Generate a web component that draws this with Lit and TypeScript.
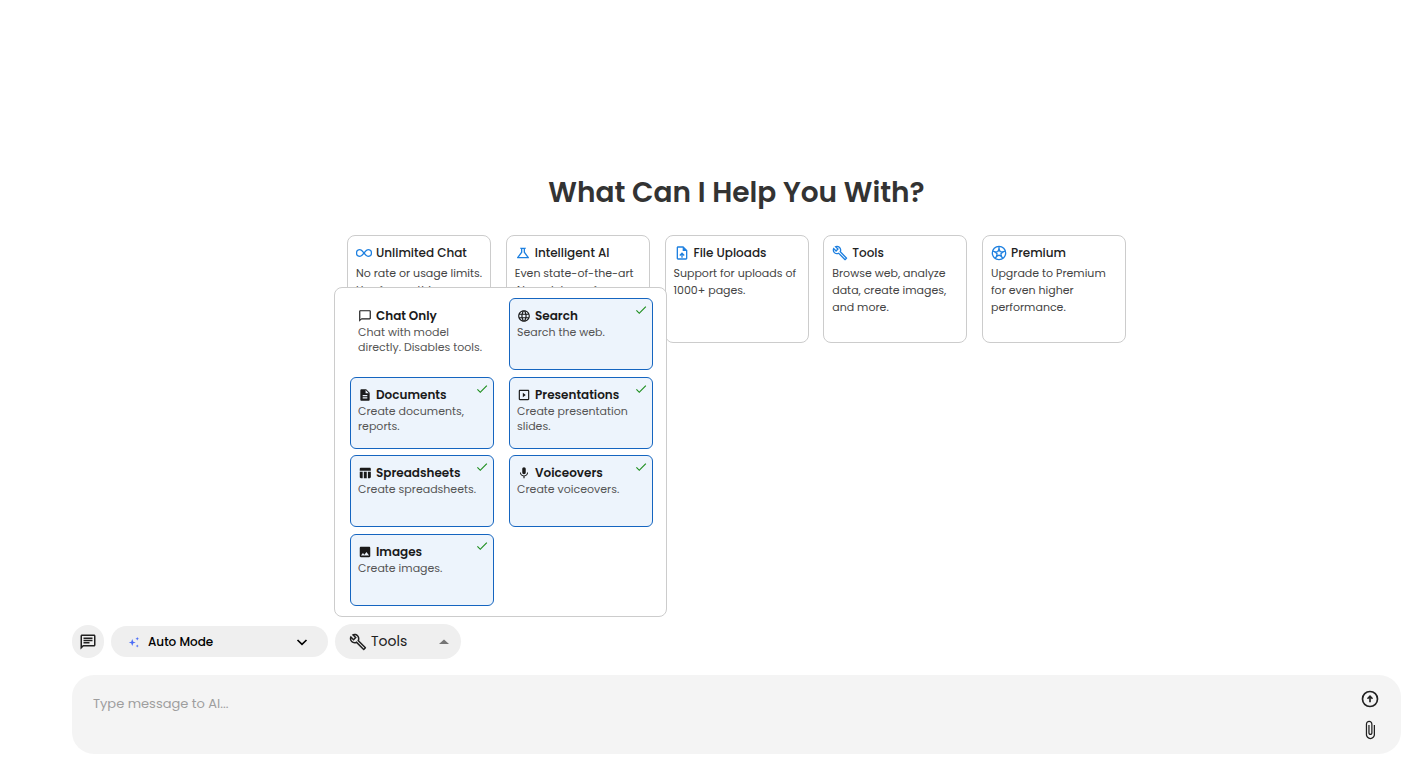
import { LitElement, html, css, svg } from "lit";
import { customElement, property, state } from "lit/decorators.js";
import { classMap } from "lit/directives/class-map.js";

const ICONS: Record<string, unknown> = {
  infinity: svg`<path d="M12 12C9.9 9.2 8.4 6.900 5.900 6.900a5.100 5.100 0 0 0 0 10.200C8.400 17.100 9.900 14.800 12 12s3.600-5.100 6.100-5.100a5.100 5.100 0 0 1 0 10.200C15.600 17.100 14.100 14.800 12 12Z" fill="none" stroke="currentColor" stroke-width="2"/>`,
  flask: svg`<path d="M13 11.33 18 18H6l5-6.67V6h2m2.96-2H8.04c-.42 0-.65.48-.39.81L9 6.5v4.17L3.2 18.4c-.49.66-.02 1.6.8 1.6h16c.82 0 1.29-.94.8-1.6L15 10.67V6.5l1.35-1.69c.26-.33.03-.81-.39-.81"/>`,
  upload: svg`<path d="M14 2H6c-1.1 0-1.99.9-1.99 2L4 20c0 1.1.89 2 1.99 2H18c1.1 0 2-.9 2-2V8l-6-6zm4 18H6V4h7v5h5v11zM8 15.01l1.41 1.41L11 14.84V19h2v-4.16l1.59 1.59L16 15.01 12.01 11z"/>`,
  wrench: svg`<path d="M22.61 18.99l-9.08-9.08c.93-2.34.45-5.1-1.44-7C9.79.61 6.21.4 3.66 2.26L7.5 6.11 6.08 7.52 2.25 3.69C.39 6.23.6 9.82 2.9 12.11c1.86 1.86 4.57 2.35 6.89 1.48l9.11 9.11c.39.39 1.02.39 1.41 0l2.3-2.3c.4-.38.4-1.01 0-1.41zm-3 1.6l-9.46-9.46c-.61.45-1.29.72-2 .82-1.36.2-2.79-.21-3.83-1.25C3.37 9.76 2.93 8.5 3 7.26l3.09 3.09 4.24-4.24-3.09-3.09c1.24-.07 2.49.37 3.44 1.31 1.08 1.08 1.49 2.57 1.24 3.96-.12.71-.42 1.37-.88 1.96l9.45 9.45-.88.89z"/>`,
  star: svg`<g fill="none" stroke="currentColor" stroke-width="2" stroke-linejoin="round"><circle cx="12" cy="12" r="10"/><path d="m12 6.2 1.8 3.7 4 .5-2.9 2.8.7 4L12 15.3l-3.6 1.9.7-4-2.9-2.8 4-.5z"/><path d="M12 2v4.2M21.5 9l-3.7 1.4M17.9 20.1l-2.3-2.9M6.1 20.1l2.3-2.9M2.5 9l3.7 1.4"/></g>`,
  bubble: svg`<path d="M20 2H4c-1.1 0-2 .9-2 2v18l4-4h14c1.1 0 2-.9 2-2V4c0-1.1-.9-2-2-2zm0 14H6l-2 2V4h16v12z"/>`,
  chat: svg`<path d="M4 4h16v12H5.17L4 17.17V4m0-2c-1.1 0-1.99.9-1.99 2L2 22l4-4h14c1.1 0 2-.9 2-2V4c0-1.1-.9-2-2-2H4zm2 10h8v2H6v-2zm0-3h12v2H6V9zm0-3h12v2H6V6z"/>`,
  globe: svg`<path d="M11.99 2C6.47 2 2 6.48 2 12s4.47 10 9.99 10C17.52 22 22 17.52 22 12S17.52 2 11.99 2zm6.93 6h-2.95c-.32-1.25-.78-2.45-1.38-3.56 1.84.63 3.37 1.91 4.33 3.56zM12 4.04c.83 1.2 1.48 2.53 1.91 3.96h-3.82c.43-1.43 1.08-2.76 1.91-3.96zM4.26 14C4.1 13.36 4 12.69 4 12s.1-1.36.26-2h3.38c-.08.66-.14 1.32-.14 2s.06 1.34.14 2H4.26zm.82 2h2.95c.32 1.25.78 2.45 1.38 3.56-1.84-.63-3.37-1.9-4.33-3.56zm2.95-8H5.08c.96-1.66 2.49-2.93 4.33-3.56C8.81 5.55 8.35 6.75 8.03 8zM12 19.96c-.83-1.2-1.48-2.53-1.91-3.96h3.82c-.43 1.43-1.08 2.76-1.91 3.96zM14.34 14H9.66c-.09-.66-.16-1.32-.16-2s.07-1.35.16-2h4.68c.09.65.16 1.32.16 2s-.07 1.34-.16 2zm.25 5.56c.6-1.11 1.06-2.31 1.38-3.56h2.95c-.96 1.65-2.49 2.93-4.33 3.56zM16.36 14c.08-.66.14-1.32.14-2s-.06-1.34-.14-2h3.38c.16.64.26 1.31.26 2s-.1 1.36-.26 2h-3.38z"/>`,
  document: svg`<path d="M14 2H6c-1.1 0-1.99.9-1.99 2L4 20c0 1.1.89 2 1.99 2H18c1.1 0 2-.9 2-2V8l-6-6zm2 16H8v-2h8v2zm0-4H8v-2h8v2zm-3-5V3.5L18.5 9H13z"/>`,
  slides: svg`<path d="M10 8v8l5-4-5-4zm9-5H5c-1.1 0-2 .9-2 2v14c0 1.1.9 2 2 2h14c1.1 0 2-.9 2-2V5c0-1.1-.9-2-2-2zm0 16H5V5h14v14z"/>`,
  table: svg`<path d="M10 10.02h5V21h-5zM17 21h3c1.1 0 2-.9 2-2v-9h-5v11zm3-18H5c-1.1 0-2 .9-2 2v3h19V5c0-1.1-.9-2-2-2zM3 19c0 1.1.9 2 2 2h3V10H3v9z"/>`,
  mic: svg`<path d="M12 14c1.66 0 2.99-1.34 2.99-3L15 5c0-1.66-1.34-3-3-3S9 3.34 9 5v6c0 1.66 1.34 3 3 3zm5.3-3c0 3-2.54 5.1-5.3 5.1S6.7 14 6.7 11H5c0 3.41 2.72 6.23 6 6.72V21h2v-3.28c3.28-.48 6-3.3 6-6.72h-1.7z"/>`,
  image: svg`<path d="M21 19V5c0-1.1-.9-2-2-2H5c-1.1 0-2 .9-2 2v14c0 1.1.9 2 2 2h14c1.1 0 2-.9 2-2zM8.5 13.5l2.5 3.01L14.5 12l4.5 6H5l3.5-4.5z"/>`,
  check: svg`<path d="M9 16.17 4.83 12l-1.42 1.41L9 19 21 7l-1.41-1.41z"/>`,
  clip: svg`<path d="M16.5 6v11.5c0 2.21-1.79 4-4 4s-4-1.79-4-4V5c0-1.38 1.12-2.5 2.5-2.5s2.5 1.12 2.5 2.5v10.5c0 .55-.45 1-1 1s-1-.45-1-1V6H10v9.5c0 1.38 1.12 2.5 2.5 2.5s2.5-1.12 2.5-2.5V5c0-2.21-1.79-4-4-4S7 2.79 7 5v12.5c0 3.04 2.46 5.5 5.5 5.5s5.5-2.46 5.5-5.5V6h-1.5z"/>`,
  send: svg`<g fill="none" stroke="currentColor" stroke-width="2"><circle cx="12" cy="12" r="9"/><path d="M12 15.800V9.500M9 11.700l3-3 3 3"/></g>`,
  sparkle: svg`<path d="M8.500 6 10.500 11.500l5 1.500-5 1.500L8.500 20l-2-5.500L1.500 13l5-1.500zM18.500 2l1.100 2.400 2.400 1.100-2.400 1.100L18.500 9l-1.100-2.400L15 5.500l2.400-1.100zM18.500 17l.9 2.100 2.100.9-2.100.9-.9 2.100-.9-2.100-2.100-.9 2.100-.9z"/>`,
  chevron: svg`<path d="m3 8 9 8.500L21 8" fill="none" stroke="currentColor" stroke-width="3.400"/>`,
  caret: svg`<path d="m2 16 10-9 10 9z"/>`,
};

@customElement("ui-icon")
class UiIcon extends LitElement {
  @property() name = "";

  static styles = css`
    :host {
      display: block;
      flex: none;
      width: 16px;
      height: 16px;
    }
    .glyph {
      display: block;
      width: 100%;
      height: 100%;
      fill: currentColor;
    }
  `;

  render() {
    return html`<svg class="glyph" viewBox="0 0 24 24" aria-hidden="true">${ICONS[this.name]}</svg>`;
  }
}

interface Item {
  icon: string;
  title: string;
  text: string;
}

const FEATURES: Item[] = [
  { icon: "infinity", title: "Unlimited Chat", text: "No rate or usage limits. Use for anything." },
  { icon: "flask", title: "Intelligent AI", text: "Even state-of-the-art AI models are free." },
  { icon: "upload", title: "File Uploads", text: "Support for uploads of 1000+ pages." },
  { icon: "wrench", title: "Tools", text: "Browse web, analyze data, create images, and more." },
  { icon: "star", title: "Premium", text: "Upgrade to Premium for even higher performance." },
];

const TOOLS: Item[] = [
  { icon: "bubble", title: "Chat Only", text: "Chat with model directly. Disables tools." },
  { icon: "globe", title: "Search", text: "Search the web." },
  { icon: "document", title: "Documents", text: "Create documents, reports." },
  { icon: "slides", title: "Presentations", text: "Create presentation slides." },
  { icon: "table", title: "Spreadsheets", text: "Create spreadsheets." },
  { icon: "mic", title: "Voiceovers", text: "Create voiceovers." },
  { icon: "image", title: "Images", text: "Create images." },
];

@customElement("app-root")
class AppRoot extends LitElement {
  @state() private open = true;
  @state() private enabled = new Set(TOOLS.slice(1).map((tool) => tool.title));

  static styles = css`
    :host {
      display: flex;
      flex-direction: column;
      box-sizing: border-box;
      min-height: 100vh;
      padding: 0 15px 14px 72px;
      background: #fff;
      color: #212121;
      font-family: Poppins, Inter, sans-serif;
      font-size: 12px;
    }
    * {
      box-sizing: border-box;
    }
    button,
    select,
    textarea {
      margin: 0;
      border: 0;
      font: inherit;
      color: inherit;
    }
    button,
    select {
      cursor: pointer;
    }
    .hero {
      flex: 1;
      padding-top: 171px;
    }
    .heading {
      margin: 0 0 20px;
      text-align: center;
      font-size: 28px;
      line-height: 44px;
      font-weight: 600;
      color: #333;
    }
    .features {
      display: flex;
      justify-content: space-between;
      max-width: 779px;
      margin: 0 auto;
    }
    .feature {
      width: 144px;
      height: 108px;
      padding: 8px;
      overflow: hidden;
      border: 1px solid #ccc;
      border-radius: 8px;
    }
    .title {
      display: flex;
      align-items: center;
      gap: 4px;
      margin: 0;
      font-size: 12px;
      line-height: 18px;
      font-weight: 500;
      white-space: nowrap;
    }
    .feature .title {
      color: #222;
    }
    .feature ui-icon {
      color: #1e80e0;
    }
    .blurb {
      margin: 3px 0 0;
      font-size: 11px;
      line-height: 17px;
      color: #444;
    }
    .toolbar {
      display: flex;
      align-items: center;
      gap: 7px;
      margin-bottom: 16px;
    }
    .round {
      display: grid;
      place-items: center;
      width: 32px;
      height: 33px;
      padding: 0;
      border-radius: 16px;
      background: #efefef;
    }
    .round ui-icon,
    .tools-button ui-icon {
      width: 18px;
      height: 18px;
    }
    .mode {
      display: grid;
      align-items: center;
      width: 217px;
      color: #000;
    }
    .mode > * {
      grid-area: 1 / 1;
    }
    .mode-select {
      appearance: none;
      width: 100%;
      height: 31px;
      padding: 0 37px;
      border-radius: 16px;
      background: #efefef;
      font-size: 12px;
      font-weight: 500;
    }
    .mode ui-icon {
      z-index: 1;
      width: 12px;
      height: 12px;
      pointer-events: none;
    }
    .spark {
      margin-left: 17px;
      color: #4a6cf7;
    }
    .arrow {
      justify-self: end;
      margin-right: 20px;
    }
    .tools {
      position: relative;
    }
    .tools-button {
      display: flex;
      align-items: center;
      gap: 4px;
      width: 126px;
      height: 35px;
      padding: 0 11px 0 14px;
      border-radius: 18px;
      background: #efefef;
      font-size: 14px;
    }
    .tools-button .caret {
      width: 12px;
      height: 12px;
      margin-left: auto;
      color: #757575;
    }
    .menu {
      position: absolute;
      bottom: calc(100% + 7px);
      left: -1px;
      display: grid;
      grid-template-columns: 144px 144px;
      align-content: space-between;
      column-gap: 15px;
      height: 330px;
      padding: 10px 13px 10px 15px;
      border: 1px solid #ccc;
      border-radius: 8px;
      background: #fff;
    }
    .tool {
      display: grid;
      grid-template-columns: 1fr auto;
      align-content: start;
      height: 72px;
      padding: 8px 7px 0;
      border: 1px solid transparent;
      border-radius: 6px;
      background: #fff;
      text-align: left;
    }
    .tool.on {
      border-color: #1565c0;
      background: #edf4fc;
    }
    .tool .title {
      font-weight: 600;
      color: #1a1a1a;
    }
    .tool .title ui-icon {
      width: 14px;
      height: 14px;
    }
    .tick {
      width: 14px;
      height: 14px;
      margin: -4px -3px 0 0;
      color: #1f8f1f;
    }
    .note {
      grid-column: 1 / -1;
      font-size: 11px;
      line-height: 15px;
      color: #555;
    }
    .composer {
      display: flex;
      height: 79px;
      padding: 14px 21px;
      border-radius: 22px;
      background: #f4f4f4;
    }
    .message {
      flex: 1;
      padding: 5px 0;
      resize: none;
      outline: none;
      background: none;
      font-size: 13px;
      line-height: 20px;
    }
    .message::placeholder {
      color: #9e9e9e;
    }
    .actions {
      display: flex;
      flex-direction: column;
      justify-content: space-between;
    }
    .action {
      padding: 0;
      background: none;
    }
    .action ui-icon {
      width: 20px;
      height: 20px;
    }
  `;

  private toggle(title: string) {
    const next = new Set(this.enabled);
    if (title === "Chat Only") next.clear();
    else if (!next.delete(title)) next.add(title);
    this.enabled = next;
  }

  private renderTool(tool: Item) {
    const on = this.enabled.has(tool.title);
    return html`
      <button
        class=${classMap({ tool: true, on })}
        type="button"
        role="menuitemcheckbox"
        aria-checked=${on ? "true" : "false"}
        @click=${() => this.toggle(tool.title)}
      >
        <span class="title"><ui-icon name=${tool.icon}></ui-icon>${tool.title}</span>
        ${on ? html`<ui-icon class="tick" name="check"></ui-icon>` : ""}
        <span class="note">${tool.text}</span>
      </button>
    `;
  }

  render() {
    return html`
      <main class="hero">
        <h1 class="heading">What Can I Help You With?</h1>
        <section class="features">
          ${FEATURES.map(
            (item) => html`
              <article class="feature">
                <h2 class="title"><ui-icon name=${item.icon}></ui-icon>${item.title}</h2>
                <p class="blurb">${item.text}</p>
              </article>
            `
          )}
        </section>
      </main>
      <div class="toolbar">
        <button class="round" type="button" aria-label="Chats"><ui-icon name="chat"></ui-icon></button>
        <div class="mode">
          <select class="mode-select" aria-label="Mode">
            <option>Auto Mode</option>
          </select>
          <ui-icon class="spark" name="sparkle"></ui-icon>
          <ui-icon class="arrow" name="chevron"></ui-icon>
        </div>
        <div class="tools">
          <button
            class="tools-button"
            type="button"
            aria-haspopup="menu"
            aria-expanded=${this.open ? "true" : "false"}
            @click=${() => (this.open = !this.open)}
          >
            <ui-icon name="wrench"></ui-icon>Tools<ui-icon class="caret" name="caret"></ui-icon>
          </button>
          ${this.open ? html`<div class="menu" role="menu">${TOOLS.map((tool) => this.renderTool(tool))}</div>` : ""}
        </div>
      </div>
      <form class="composer" @submit=${(event: Event) => event.preventDefault()}>
        <textarea class="message" aria-label="Message" placeholder="Type message to AI..."></textarea>
        <div class="actions">
          <button class="action" type="submit" aria-label="Send"><ui-icon name="send"></ui-icon></button>
          <button class="action" type="button" aria-label="Attach file"><ui-icon name="clip"></ui-icon></button>
        </div>
      </form>
    `;
  }
}
